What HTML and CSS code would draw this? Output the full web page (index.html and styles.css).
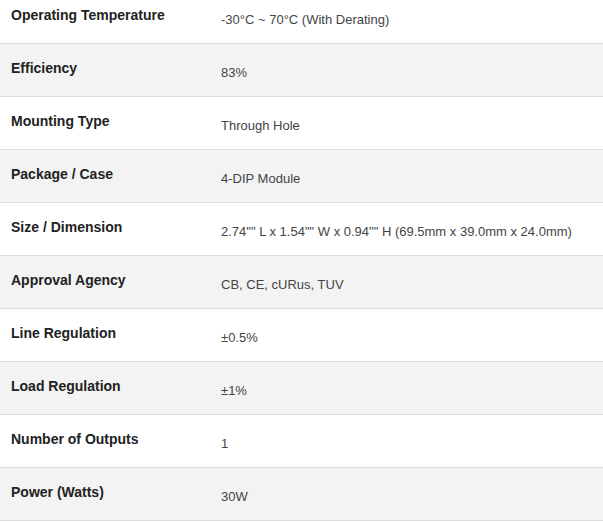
FILE: index.html
```html
<!DOCTYPE html>
<html>
<head>
<meta charset="utf-8">
<link rel="stylesheet" href="styles.css">
</head>
<body>
<table class="specs">
<tbody>
<tr><th>Operating Temperature</th><td>-30°C ~ 70°C (With Derating)</td></tr>
<tr><th>Efficiency</th><td>83%</td></tr>
<tr><th>Mounting Type</th><td>Through Hole</td></tr>
<tr><th>Package / Case</th><td>4-DIP Module</td></tr>
<tr><th>Size / Dimension</th><td>2.74"" L x 1.54"" W x 0.94"" H (69.5mm x 39.0mm x 24.0mm)</td></tr>
<tr><th>Approval Agency</th><td>CB, CE, cURus, TUV</td></tr>
<tr><th>Line Regulation</th><td>±0.5%</td></tr>
<tr><th>Load Regulation</th><td>±1%</td></tr>
<tr><th>Number of Outputs</th><td>1</td></tr>
<tr><th>Power (Watts)</th><td>30W</td></tr>
</tbody>
</table>
</body>
</html>
```
FILE: styles.css
```css
html, body {
  margin: 0;
  padding: 0;
  background: #fff;
}
.specs {
  width: 100%;
  border-collapse: collapse;
  margin-top: -9px;
  font-family: "Liberation Sans", Arial, sans-serif;
}
.specs tr {
  border-bottom: 1px solid #dddddd;
}
.specs tr:nth-child(even) {
  background: #f3f3f3;
}
.specs th, .specs td {
  height: 53px;
  box-sizing: border-box;
  vertical-align: top;
  text-align: left;
}
.specs tr:first-child th, .specs tr:first-child td {
  height: 52px;
}
.specs th {
  width: 221px;
  padding: 16px 0 0 11px;
  font-size: 14px;
  font-weight: bold;
  line-height: 16px;
  color: #222;
}
.specs td {
  padding: 21px 10px 0 0;
  font-size: 13px;
  line-height: 15px;
  color: #444;
}
```
